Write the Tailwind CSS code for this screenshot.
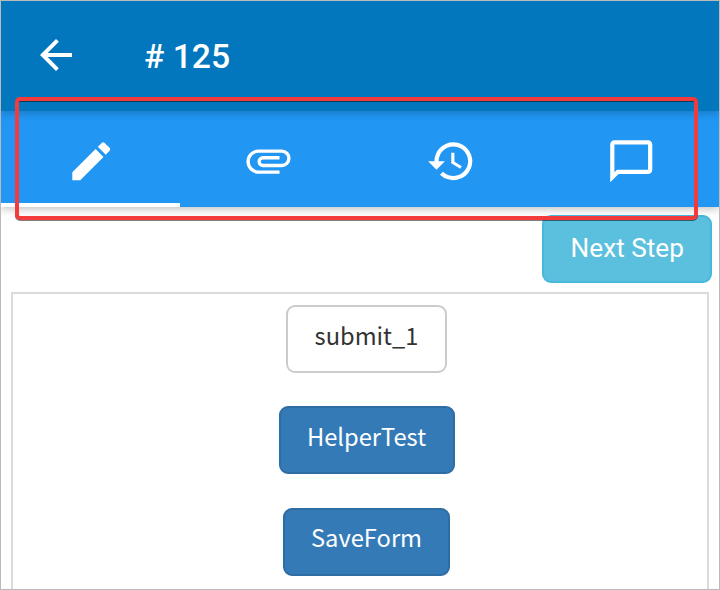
<!DOCTYPE html>
<html lang="en">
<head>
<meta charset="utf-8">
<title># 125</title>
<script src="https://cdn.jsdelivr.net/npm/@tailwindcss/browser@4"></script>
</head>
<body class="h-[590px] w-[720px] overflow-hidden bg-white">
<div class="relative flex h-[590px] w-[720px] flex-col overflow-hidden border border-[#bababa] bg-white">
  <header class="z-20 flex h-[110px] shrink-0 items-center bg-[#0277bd] pb-0.5 pl-[31px] text-white shadow-[0_2px_8px_rgba(0,0,0,0.2)]">
    <svg class="size-12 shrink-0" viewBox="0 0 24 24" fill="currentColor"><path d="M20 11H7.83l5.59-5.59L12 4l-8 8 8 8 1.41-1.41L7.83 13H20v-2z"/></svg>
    <h1 class="ml-16 pt-[3px] font-['Roboto',sans-serif] text-[33.700px] leading-none font-medium"># 125</h1>
  </header>
  <nav class="z-10 grid h-24 shrink-0 grid-cols-[179px_180px_180px_179px] bg-[#2196f3] text-white shadow-[0_2px_8px_rgba(0,0,0,0.25)]">
    <a class="flex items-center justify-center border-b-4 border-white pt-2 pl-0.5">
      <svg class="size-[50.500px]" viewBox="0 0 24 24" fill="currentColor"><path d="M3 17.25V21h3.75L17.81 9.94l-3.75-3.75L3 17.25zM20.71 7.04c.39-.39.39-1.02 0-1.41l-2.34-2.34c-.39-.39-1.02-.39-1.41 0l-1.83 1.83 3.75 3.75 1.83-1.83z"/></svg>
    </a>
    <a class="flex items-center justify-center pt-[2px] pr-[3px]">
      <svg class="size-[53px]" viewBox="0 0 24 24" fill="currentColor"><path d="M7.5 18A5.5 5.5 0 0 1 2 12.500A5.500 5.500 0 0 1 7.500 7H18a4 4 0 0 1 0 8H9.500a2.500 2.500 0 0 1 0-5H17v1.500H9.500a1 1 0 0 0 0 2H18a2.500 2.500 0 0 0 0-5H7.500a4 4 0 0 0 0 8H17V18z"/></svg>
    </a>
    <a class="flex items-center justify-center pt-1 pl-0.5">
      <svg class="size-[50.500px]" viewBox="0 0 24 24" fill="currentColor"><path d="M13 3a9 9 0 0 0-9 9H1l3.890 3.890.07.14L9 12H6a7 7 0 1 1 2.060 4.940l-1.420 1.420A9 9 0 1 0 13 3zm-1 5v5l4.280 2.540.72-1.210-3.500-2.080V8z"/></svg>
    </a>
    <a class="flex items-center justify-center pt-1 pl-[3px]">
      <svg class="size-[50.500px]" viewBox="0 0 24 24" fill="currentColor"><path d="M20 2H4c-1.100 0-2 .9-2 2v18l4-4h14c1.100 0 2-.9 2-2V4c0-1.100-.9-2-2-2zm0 14H5.200L4 17.200V4h16v12z"/></svg>
    </a>
  </nav>
  <main class="flex flex-1 flex-col px-[10px] pt-2">
    <div class="-mr-[3px] flex h-[77px] shrink-0 justify-end">
      <button class="h-[68px] w-[170.500px] rounded-[9px] border-2 border-[#46b8da] bg-[#5bc0de] pb-px pl-px font-['Roboto',sans-serif] text-[26.200px] leading-none text-white">Next Step</button>
    </div>
    <section class="flex flex-1 flex-col items-center gap-[33.300px] border-2 border-b-0 border-[#dadada] pt-[11px] pl-[13px] font-['Noto_Sans_CJK_SC',sans-serif] text-[23.700px] leading-none">
      <button class="h-[68px] w-[161px] shrink-0 rounded-[9px] border-2 border-[#cccccc] bg-white pb-1.5 text-[#333333]">submit_1</button>
      <button class="h-[68px] w-[176px] shrink-0 rounded-[9px] border-2 border-[#2e6da4] bg-[#337ab7] pb-1.5 text-white">HelperTest</button>
      <button class="h-[68px] w-[167px] shrink-0 rounded-[9px] border-2 border-[#2e6da4] bg-[#337ab7] pb-2 text-white">SaveForm</button>
    </section>
  </main>
  <div class="pointer-events-none absolute top-[96px] left-[14px] z-30 h-[123px] w-[683px] rounded-[5px] border-4 border-[#f43b3c] drop-shadow-[0_1px_0px_rgba(0,0,0,0.5)]"></div>
</div>
</body>
</html>
